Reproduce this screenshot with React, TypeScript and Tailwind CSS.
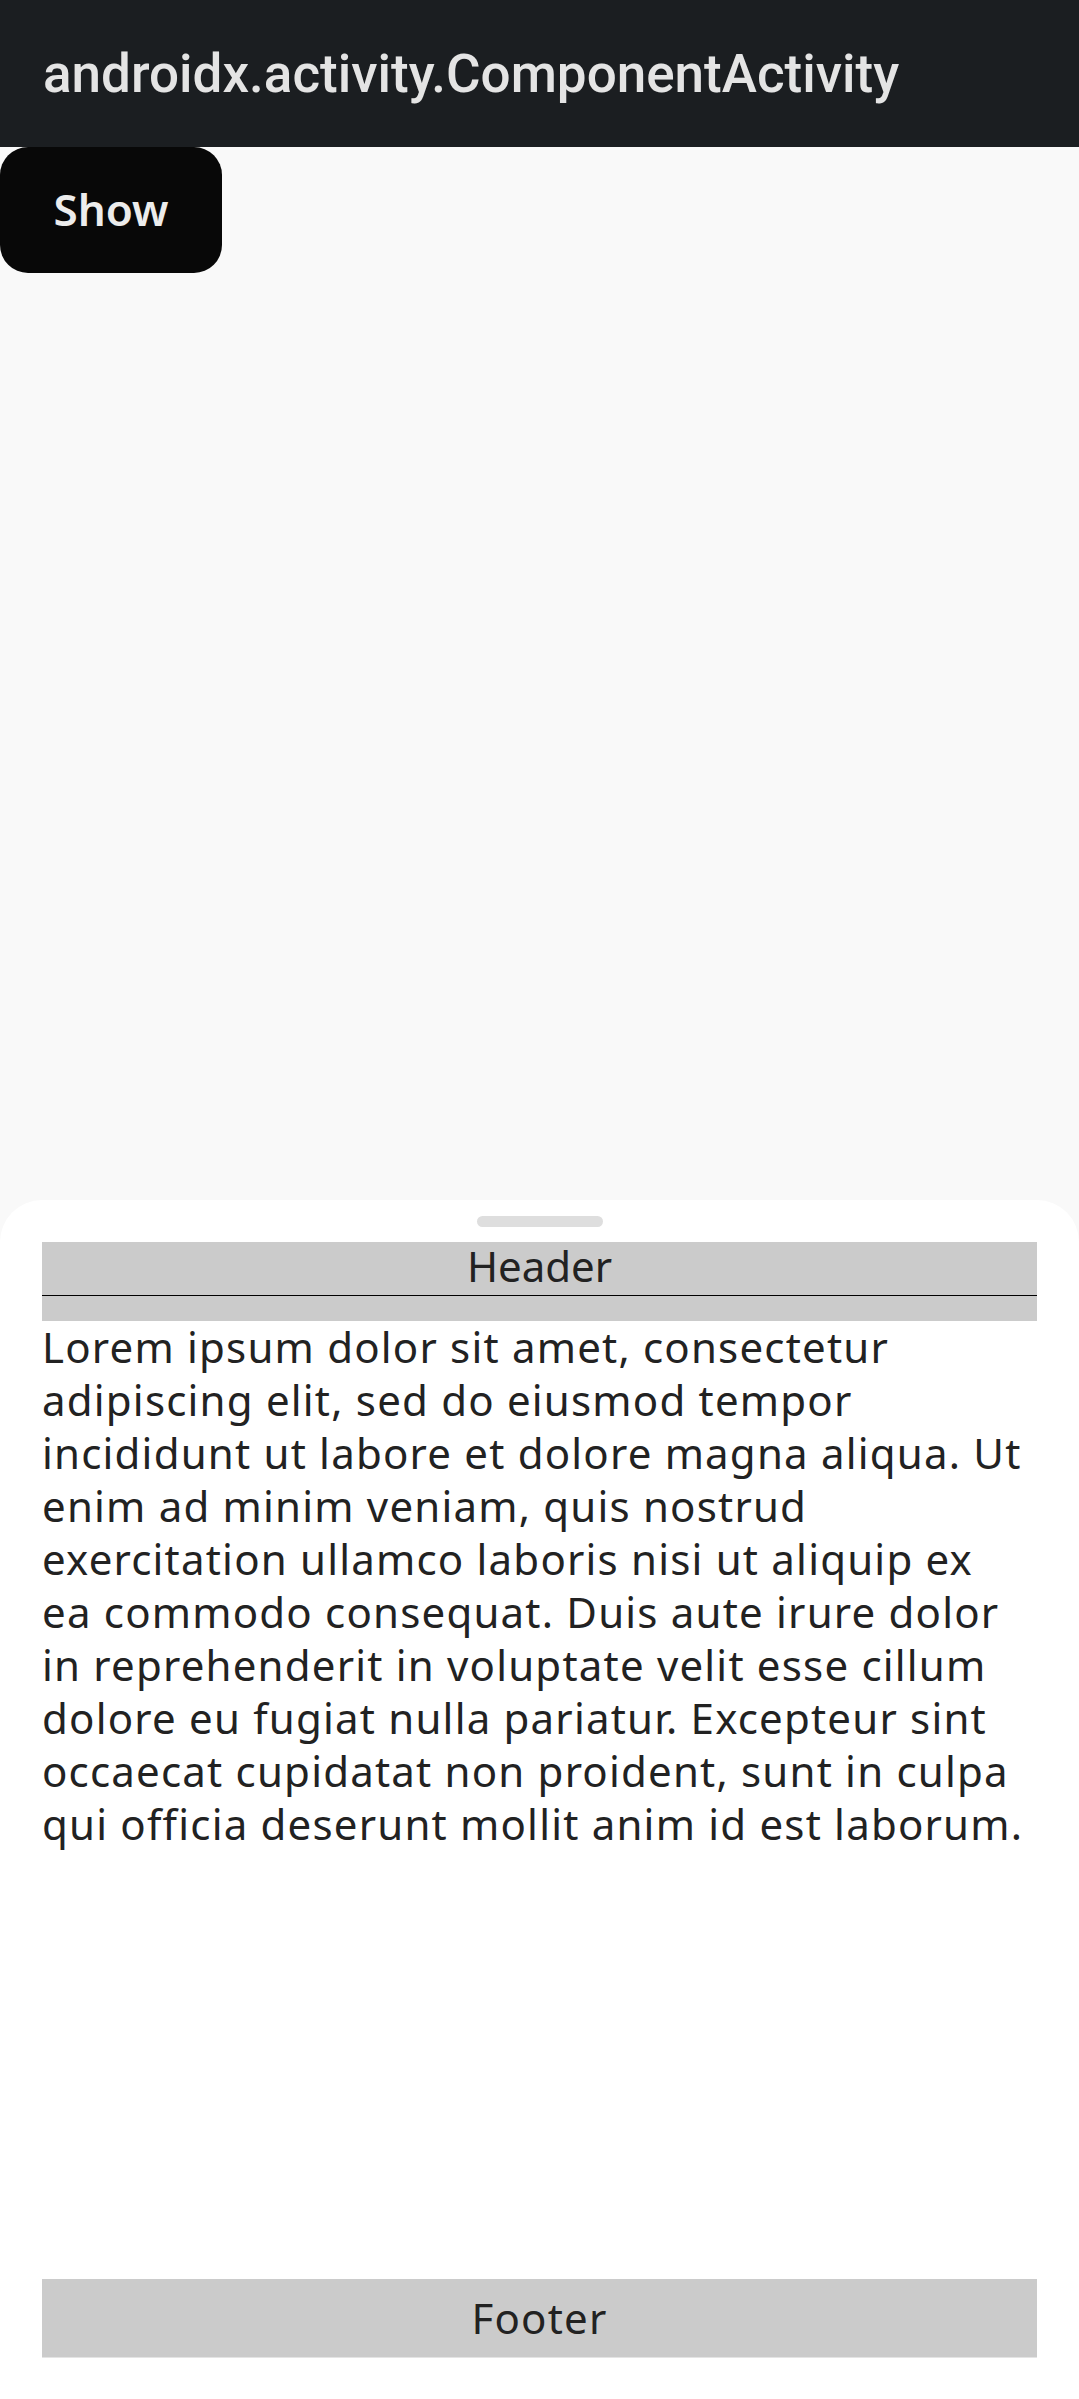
import React from "react";

const lines = [
  "Lorem ipsum dolor sit amet, consectetur",
  "adipiscing elit, sed do eiusmod tempor",
  "incididunt ut labore et dolore magna aliqua. Ut",
  "enim ad minim veniam, quis nostrud",
  "exercitation ullamco laboris nisi ut aliquip ex",
  "ea commodo consequat. Duis aute irure dolor",
  "in reprehenderit in voluptate velit esse cillum",
  "dolore eu fugiat nulla pariatur. Excepteur sint",
  "occaecat cupidatat non proident, sunt in culpa",
  "qui officia deserunt mollit anim id est laborum.",
];

export default function App() {
  return (
    <div className="h-[2399px] w-full flex flex-col bg-[#f9f9f9] overflow-hidden font-['Noto_Sans',sans-serif]">
      {/* Toolbar */}
      <div className="h-[147px] shrink-0 bg-[#1b1e21] flex items-center pl-[43px] pt-[2px]">
        <span className="font-['Roboto',sans-serif] font-medium text-[53px] leading-none text-[#e4e4e4]">
          androidx.activity.ComponentActivity
        </span>
      </div>

      {/* Content */}
      <div className="flex-1">
        <button
          type="button"
          className="w-[222px] h-[126px] rounded-[28px] bg-[#080808] text-[#ececec] text-[44px] font-semibold flex items-center justify-center pb-[2px]"
        >
          Show
        </button>
      </div>

      {/* Bottom sheet */}
      <div className="h-[1199px] shrink-0 bg-white rounded-t-[42px] flex flex-col px-[42px] pb-[41px]">
        <div className="pt-[16px] pb-[15px] flex justify-center">
          <div className="w-[126px] h-[11px] rounded-full bg-[#dedede]" />
        </div>

        <div className="bg-[#cbcbcb] h-[79px]">
          <div className="h-[53px] pb-[5px] flex items-center justify-center text-[42px] text-[#222] leading-none">
            Header
          </div>
          <div className="h-px bg-black" />
        </div>

        <div className="text-[42px] leading-[53px] tracking-[1.2px] text-[#222] -mt-[1px]">
          {lines.map((l) => (
            <div key={l} className="whitespace-nowrap">
              {l}
            </div>
          ))}
        </div>

        <div className="flex-1" />

        <div className="h-[79px] bg-[#cbcbcb] border-b border-[#e4e4e4] flex items-center justify-center text-[42px] tracking-[1.2px] text-[#222] leading-none">
          Footer
        </div>
      </div>
    </div>
  );
}
